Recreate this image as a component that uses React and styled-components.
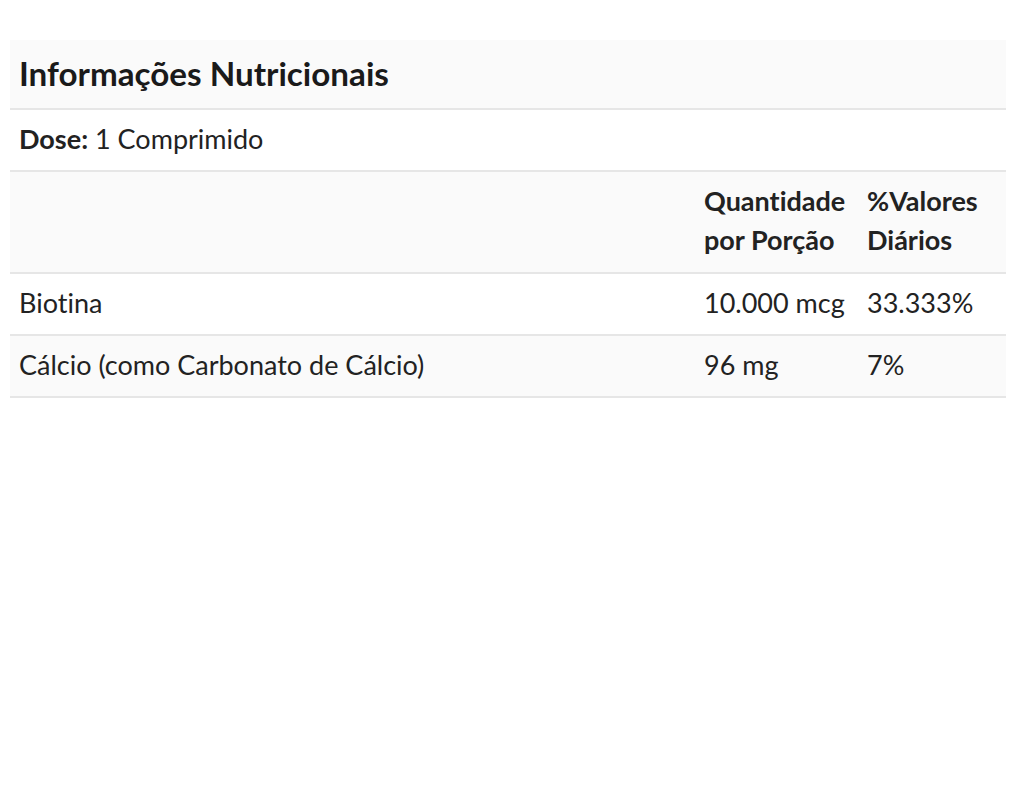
import React from 'react'
import styled, { createGlobalStyle } from 'styled-components'

const Global = createGlobalStyle`
  body {
    margin: 0;
    background: #fff;
    font-family: Lato, "Open Sans", sans-serif;
    font-variant-ligatures: none;
    color: #222;
  }
`

const Wrap = styled.div`
  padding: 40px 12px 0 10px;
`

const Table = styled.table`
  width: 100%;
  border-collapse: collapse;
  font-size: 27px;
  line-height: 39px;
`

const Row = styled.tr`
  background: ${p => (p.$shaded ? '#fafafa' : '#fff')};
  border-bottom: 2px solid #e6e6e6;
`

const Title = styled.th`
  text-align: left;
  font-size: 33.2px;
  font-weight: 700;
  padding: 14px 9px 15px;
  color: #1a1a1a;
`

const Cell = styled.td`
  padding: 9px 9px ${p => (p.$head ? '13px' : '12px')};
  text-align: left;
  vertical-align: top;
  white-space: ${p => (p.$nowrap ? 'nowrap' : 'normal')};
  font-weight: ${p => (p.$head ? 700 : 400)};
  width: ${p => p.$w || 'auto'};
`

const Label = styled.strong`
  font-weight: 700;
`

const nutrients = [
  { name: 'Biotina', qty: '10.000 mcg', pct: '33.333%' },
  { name: 'Cálcio (como Carbonato de Cálcio)', qty: '96 mg', pct: '7%' },
]

const App = () => {
  return (
    <Wrap>
      <Global />
      <Table>
        <tbody>
          <Row $shaded>
            <Title colSpan={3}>Informações Nutricionais</Title>
          </Row>
          <Row>
            <Cell colSpan={3}>
              <Label>Dose:</Label> 1 Comprimido
            </Cell>
          </Row>
          <Row $shaded>
            <Cell $head></Cell>
            <Cell $head $w="145px">Quantidade por Porção</Cell>
            <Cell $head $w="130px">%Valores Diários</Cell>
          </Row>
          {nutrients.map((n, i) => (
            <Row key={n.name} $shaded={i % 2 === 1}>
              <Cell>{n.name}</Cell>
              <Cell $nowrap>{n.qty}</Cell>
              <Cell $nowrap>{n.pct}</Cell>
            </Row>
          ))}
        </tbody>
      </Table>
    </Wrap>
  )
}

export default App
